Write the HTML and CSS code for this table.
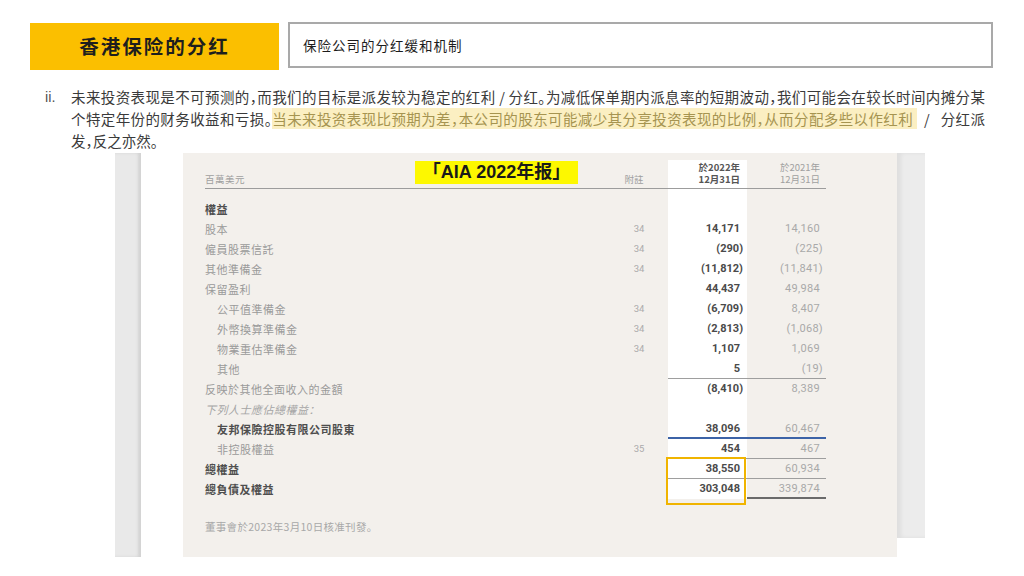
FILE: index.html
```html
<!DOCTYPE html>
<html lang="zh">
<head>
<meta charset="utf-8">
<title>香港保险的分红</title>
<link rel="stylesheet" href="styles.css">
</head>
<body>
<div class="page">
  <header class="topbar">
    <div class="title">香港保险的分红</div>
    <div class="subtitle">保险公司的分红缓和机制</div>
  </header>

  <div class="para">
    <span class="marker">ii.</span>
    <div class="lines">
      <span class="line">未来投资表现是不可预测的，而我们的目标是派发较为稳定的红利 / 分红。为减低保单期内派息率的短期波动，我们可能会在较长时间内摊分某</span>
      <span class="line">个特定年份的财务收益和亏损。<mark class="hl">当未来投资表现比预期为差，本公司的股东可能减少其分享投资表现的比例，从而分配多些以作红利&nbsp;</mark>&nbsp;&nbsp;/&nbsp;&nbsp;&nbsp;分红派</span>
      <span class="line last">发，反之亦然。</span>
    </div>
  </div>

  <div class="report">
    <div class="strip-l"></div>
    <div class="panel">
      <div class="tablewrap">
        <span class="badge">「AIA 2022年报」</span>
        <table class="fin">
          <thead>
            <tr>
              <th class="lab">百萬美元</th>
              <th class="note">附註</th>
              <th class="c1">於2022年<br>12月31日</th>
              <th class="c2">於2021年<br>12月31日</th>
            </tr>
          </thead>
          <tbody>
            <tr class="spacer"><td></td><td></td><td class="c1"></td><td></td></tr>
            <tr><td class="lab b">權益</td><td class="note"></td><td class="c1"></td><td class="c2"></td></tr>
            <tr><td class="lab">股本</td><td class="note">34</td><td class="c1 pos">14,171</td><td class="c2 pos">14,160</td></tr>
            <tr><td class="lab">僱員股票信託</td><td class="note">34</td><td class="c1">(290)</td><td class="c2">(225)</td></tr>
            <tr><td class="lab">其他準備金</td><td class="note">34</td><td class="c1">(11,812)</td><td class="c2">(11,841)</td></tr>
            <tr><td class="lab">保留盈利</td><td class="note"></td><td class="c1 pos">44,437</td><td class="c2 pos">49,984</td></tr>
            <tr><td class="lab ind">公平值準備金</td><td class="note">34</td><td class="c1">(6,709)</td><td class="c2 pos">8,407</td></tr>
            <tr><td class="lab ind">外幣換算準備金</td><td class="note">34</td><td class="c1">(2,813)</td><td class="c2">(1,068)</td></tr>
            <tr><td class="lab ind">物業重估準備金</td><td class="note">34</td><td class="c1 pos">1,107</td><td class="c2 pos">1,069</td></tr>
            <tr class="rule"><td class="lab ind">其他</td><td class="note"></td><td class="c1 pos">5</td><td class="c2">(19)</td></tr>
            <tr><td class="lab">反映於其他全面收入的金額</td><td class="note"></td><td class="c1">(8,410)</td><td class="c2 pos">8,389</td></tr>
            <tr><td class="lab it">下列人士應佔總權益：</td><td class="note"></td><td class="c1"></td><td class="c2"></td></tr>
            <tr class="blue"><td class="lab ind b">友邦保險控股有限公司股東</td><td class="note"></td><td class="c1 pos">38,096</td><td class="c2 pos">60,467</td></tr>
            <tr class="rule"><td class="lab ind">非控股權益</td><td class="note">35</td><td class="c1 pos">454</td><td class="c2 pos">467</td></tr>
            <tr class="rule"><td class="lab b">總權益</td><td class="note"></td><td class="c1 pos">38,550</td><td class="c2 pos">60,934</td></tr>
            <tr class="total"><td class="lab b">總負債及權益</td><td class="note"></td><td class="c1 pos">303,048</td><td class="c2 pos">339,874</td></tr>
          </tbody>
        </table>
        <div class="boxmark"></div>
      </div>
      <p class="foot">董事會於2023年3月10日核准刊發。</p>
    </div>
    <div class="strip-r"></div>
  </div>
</div>
</body>
</html>
```

FILE: styles.css
```css
* { box-sizing: border-box; }
html, body { margin: 0; padding: 0; background: #ffffff; }
body {
  width: 1024px;
  height: 576px;
  overflow: hidden;
  font-family: "Noto Sans CJK SC", "Noto Sans", sans-serif;
}

.topbar {
  display: flex;
  align-items: flex-start;
  gap: 9px;
  padding: 22px 0 0 30px;
}
.title {
  margin-top: 1px;
  width: 249px;
  height: 47px;
  background: #fbbf00;
  color: #1e1e1e;
  font-weight: 700;
  font-size: 19.5px;
  letter-spacing: 2px;
  line-height: 46px;
  text-align: center;
}
.subtitle {
  width: 705px;
  height: 46px;
  border: 2px solid #a9a9a9;
  padding-left: 13px;
  font-size: 13.5px;
  letter-spacing: 1px;
  line-height: 42px;
  color: #1c1c1c;
}

.para {
  display: flex;
  margin-top: 16px;
  padding-left: 45px;
  font-family: "Noto Sans CJK TC", "Noto Sans CJK SC", sans-serif;
  font-size: 14.5px;
  line-height: 22px;
  color: #3a3a3a;
  font-feature-settings: "halt";
}
.marker {
  width: 26px;
  flex: none;
  font-family: "Liberation Sans", sans-serif;
  color: #555;
}
.lines { width: 914px; }
.line {
  display: block;
  white-space: nowrap;
  text-align: justify;
  text-align-last: justify;
}
.line.last { text-align-last: left; }
.hl {
  background: #fbefc2;
  color: #a69450;
}

.report {
  display: flex;
  align-items: flex-start;
  margin-top: 1px;
  margin-left: 115px;
}
.strip-l {
  width: 26px;
  height: 404px;
  background: #e9e9e9;
  box-shadow: inset -3px 0 3px #d3d3d3;
}
.panel {
  margin-left: 42px;
  width: 714px;
  height: 404px;
  background: #f3f0ec;
  padding: 7px 0 0 22px;
}
.strip-r {
  width: 28px;
  height: 385px;
  background: #ececec;
  box-shadow: inset 4px 0 4px rgba(0,0,0,0.06);
}

.tablewrap {
  position: relative;
  width: 621px;
}
.badge {
  position: absolute;
  left: 210px;
  top: 1px;
  width: 163px;
  height: 23px;
  background: #fdf800;
  color: #1a1a1a;
  font-family: "Liberation Sans", "Noto Sans CJK SC", sans-serif;
  font-weight: 700;
  font-size: 18px;
  line-height: 23px;
  text-align: center;
}

.fin {
  width: 621px;
  border-collapse: separate;
  border-spacing: 0;
  table-layout: fixed;
}
.fin th, .fin td { padding: 0; }
.fin th {
  font-weight: 400;
  font-size: 9.5px;
  line-height: 12px;
  color: #a0a0a0;
  vertical-align: bottom;
  padding: 1px 0 4px;
  box-shadow: inset 0 -1px 0 #9c9c9c;
  font-family: "Noto Sans CJK TC", sans-serif;
}
.fin th.lab { width: 405px; text-align: left; }
.fin th.note { width: 58px; text-align: center; padding-right: 10px; }
.fin th.c1 { width: 79px; text-align: right; padding-right: 7px; color: #555; font-weight: 700; }
.fin th.c2 { width: 79px; text-align: right; padding-right: 6px; }

.fin td {
  height: 20px;
  line-height: 20px;
  white-space: nowrap;
}
.fin .spacer td { height: 10px; line-height: 10px; }
.fin .c1 { background: #ffffff; }

.lab {
  font-family: "Noto Sans CJK TC", sans-serif;
  font-size: 11px;
  letter-spacing: 0.5px;
  color: #9a9a9a;
}
.lab.ind { padding-left: 12px; }
.lab.b { color: #4e4e4e; font-weight: 700; }
.lab.it { font-style: italic; color: #a5a5a5; }

.note {
  text-align: center;
  padding-right: 6px;
  font-family: "Roboto", sans-serif;
  font-size: 9.5px;
  color: #ababab;
}
td.c1 {
  text-align: right;
  padding-right: 4px;
  font-family: "Roboto", sans-serif;
  font-weight: 700;
  font-size: 11px;
  color: #4a4a4a;
}
td.c2 {
  text-align: right;
  padding-right: 3px;
  font-family: "Roboto", sans-serif;
  font-size: 11px;
  letter-spacing: 0.3px;
  color: #a9a9a9;
}
td.c1.pos { padding-right: 7px; }
td.c2.pos { padding-right: 6px; }

.rule td.c1, .rule td.c2 { box-shadow: inset 0 -1px 0 #9e9e9e; }
.blue td.c1, .blue td.c2 { box-shadow: inset 0 -2px 0 #3c63a7; }
.total td.c2 { box-shadow: inset 0 -2px 0 #6a6a6a; }

.boxmark {
  position: absolute;
  left: 461px;
  top: 297px;
  width: 80px;
  height: 48px;
  border: 2px solid #f0b400;
}

.foot {
  margin: 20px 0 0;
  font-family: "Noto Sans CJK TC", sans-serif;
  font-size: 10.5px;
  line-height: 16px;
  letter-spacing: 0.3px;
  color: #a8a8a8;
}
```
